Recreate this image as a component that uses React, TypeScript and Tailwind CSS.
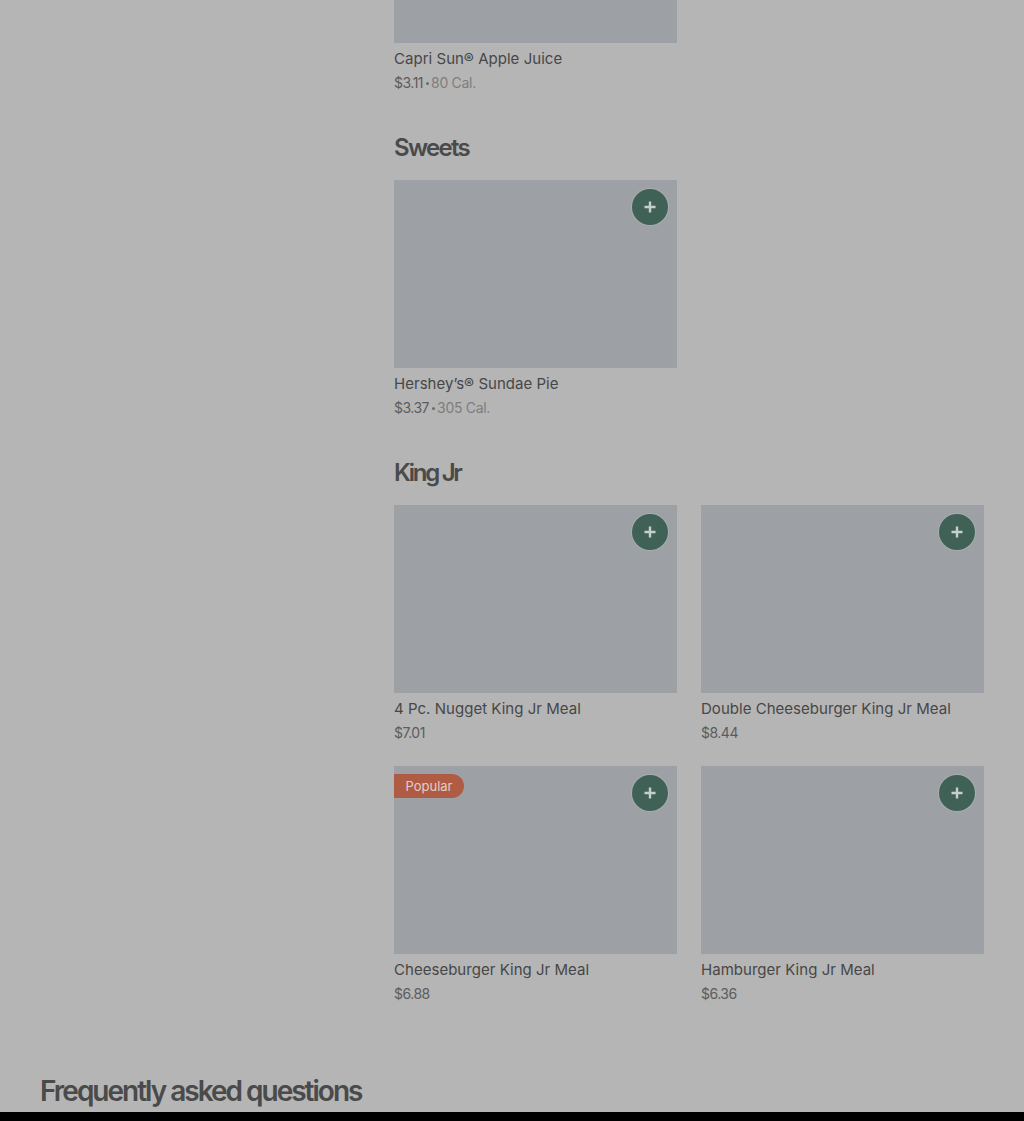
type Item = {
  name: string;
  price: string;
  cal?: string;
  popular?: boolean;
};

const kingJr: Item[] = [
  { name: '4 Pc. Nugget King Jr Meal', price: '$7.01' },
  { name: 'Double Cheeseburger King Jr Meal', price: '$8.44' },
  { name: 'Cheeseburger King Jr Meal', price: '$6.88', popular: true },
  { name: 'Hamburger King Jr Meal', price: '$6.36' },
];

function ItemText({ name, price, cal }: Item) {
  return (
    <div>
      <div className="mt-[6px] h-[20px] text-[15px] leading-[20px] tracking-[0.03px] text-[#474747]">{name}</div>
      <div className="mt-[4px] flex h-[20px] items-center text-[14px] leading-[20px] tracking-[-0.5px] text-[#5c5c5c]">
        {price}
        {cal && (
          <>
            <span className="mx-[2.5px] h-[3px] w-[3px] rounded-full bg-[#6b6b6b]" />
            <span className="tracking-[-0.3px] text-[#7d7d7d]">{cal}</span>
          </>
        )}
      </div>
    </div>
  );
}

function Card(item: Item) {
  return (
    <div>
      <div className="relative h-[188px] bg-[#9da1a5]">
        {item.popular && (
          <span className="absolute left-0 top-[8px] flex h-[24px] w-[70px] items-center justify-center rounded-r-full bg-[#b05c45] pt-[1px] text-[13px] text-[#e0cdc8]">
            Popular
          </span>
        )}
        <button className="absolute right-[9px] top-[9px] flex h-[36px] w-[36px] items-center justify-center rounded-full bg-[#3f6156] ring-1 ring-[#a7aeac]">
          <svg width="12" height="12" viewBox="0 0 12 12" fill="none">
            <path d="M6 0.5v11M0.5 6h11" stroke="#c5cfcb" strokeWidth="2.4" />
          </svg>
        </button>
      </div>
      <ItemText {...item} />
    </div>
  );
}

function Heading({ children, className }: { children: string; className: string }) {
  return (
    <h2 className={`mb-[16px] h-[32px] text-[24px] font-semibold leading-[32px] text-[#4a4a4a] ${className}`}>
      {children}
    </h2>
  );
}

export default function App() {
  return (
    <div className="h-[1121px] overflow-hidden bg-black font-['Inter',sans-serif]">
      <div className="h-[1112px] overflow-hidden bg-[#b5b5b5]">
        <div className="pl-[394px] pr-[40px]">
          <div className="w-[283px]">
            <div className="h-[43px] bg-[#9da1a5]" />
            <ItemText name="Capri Sun® Apple Juice" price="$3.11" cal="80 Cal." />
          </div>

          <div className="mt-[39px]">
            <Heading className="tracking-[-1.7px]">Sweets</Heading>
            <div className="grid grid-cols-2 gap-x-[24px]">
              <Card name="Hershey’s® Sundae Pie" price="$3.37" cal="305 Cal." />
            </div>
          </div>

          <div className="mt-[39px]">
            <Heading className="tracking-[-2.3px]">King Jr</Heading>
            <div className="grid grid-cols-2 gap-x-[24px] gap-y-[23px]">
              {kingJr.map((item) => (
                <Card key={item.name} {...item} />
              ))}
            </div>
          </div>
        </div>

        <h2 className="ml-[40px] mt-[69px] text-[28px] font-semibold leading-[36px] tracking-[-2px] text-[#4a4a4a]">
          Frequently asked questions
        </h2>
      </div>
    </div>
  );
}
